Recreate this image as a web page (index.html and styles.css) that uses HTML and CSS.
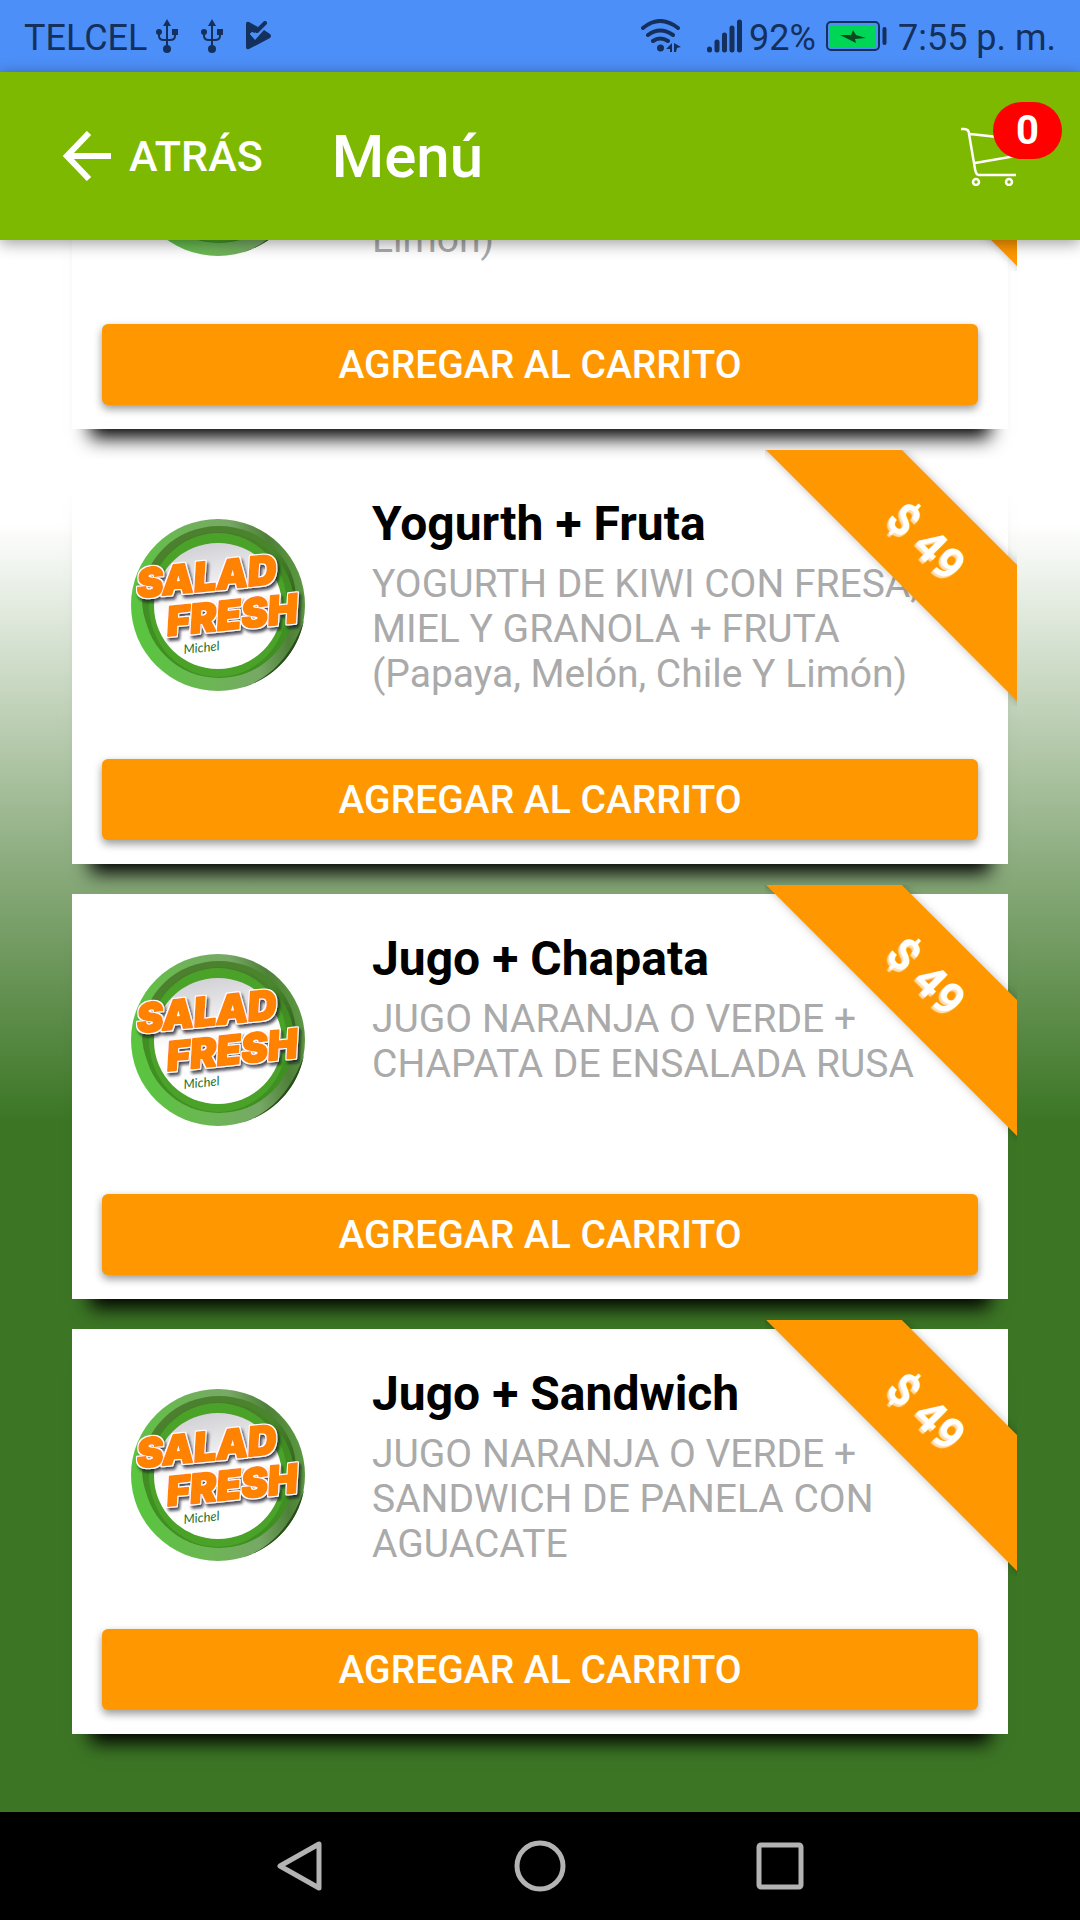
FILE: index.html
```html
<!doctype html>
<html lang="es">
<head>
	<meta charset="UTF-8">
	<meta name="viewport" content="width=device-width, initial-scale=1">
	<title>Menú</title>
	<link rel="stylesheet" href="styles.css">
</head>
<body>
	<!-- shared shapes -->
	<svg class="defs" aria-hidden="true">
		<defs>
			<linearGradient id="rim" x1="0" y1="0.6" x2="1" y2="0.4">
				<stop offset="0" stop-color="#58c63d"/>
				<stop offset="0.35" stop-color="#6cb654"/>
				<stop offset="0.65" stop-color="#77a866"/>
				<stop offset="0.85" stop-color="#4f8038"/>
				<stop offset="1" stop-color="#5c9a42"/>
			</linearGradient>
			<linearGradient id="groove" x1="0" y1="0" x2="1" y2="1">
				<stop offset="0" stop-color="#4e7c31"/>
				<stop offset="0.5" stop-color="#48872a"/>
				<stop offset="1" stop-color="#1d4010"/>
			</linearGradient>
			<linearGradient id="left-rim" x1="0" y1="0" x2="0" y2="1">
				<stop offset="0" stop-color="#4a7a2d"/>
				<stop offset="0.35" stop-color="#3f8f22"/>
				<stop offset="1" stop-color="#3f8f22"/>
			</linearGradient>
			<linearGradient id="plate" x1="0.3" y1="0" x2="0.5" y2="1">
				<stop offset="0" stop-color="#cfcfd4"/>
				<stop offset="0.5" stop-color="#fff"/>
			</linearGradient>
			<filter id="outline" x="-20%" y="-20%" width="140%" height="150%">
				<feMorphology in="SourceAlpha" operator="dilate" radius="1" result="fat"/>
				<feFlood flood-color="#fff"/>
				<feComposite in2="fat" operator="in" result="edge"/>
				<feMerge result="word">
					<feMergeNode in="edge"/>
					<feMergeNode in="SourceGraphic"/>
				</feMerge>
				<feDropShadow in="word" dx="2" dy="3" stdDeviation="1.5" flood-color="#112" flood-opacity="0.75"/>
			</filter>
			<symbol id="salad" viewBox="31 29 174 172">
				<ellipse cx="118" cy="115" rx="87" ry="86" fill="url(#rim)"/>
				<path d="M140 198A87 86 0 0 0 204 130C192 165 170 190 140 198z" fill="#2a4b1c"/>
				<ellipse cx="119" cy="109" rx="77" ry="73" fill="url(#groove)"/>
				<ellipse cx="119" cy="115" rx="75" ry="73" fill="url(#left-rim)"/>
				<ellipse cx="118" cy="115" rx="69" ry="72" fill="#4aa328"/>
				<ellipse cx="118" cy="116" rx="64" ry="63" fill="url(#plate)"/>
				<g class="brand" filter="url(#outline)">
					<text x="38" y="108" transform="rotate(-6 38 108)">SALAD</text>
					<text x="68" y="146" transform="rotate(-6 68 146)">FRESH</text>
				</g>
				<text class="sign" x="84" y="164" transform="rotate(-6 84 164)">Michel</text>
			</symbol>
			<symbol id="usb" viewBox="0 0 24 34">
				<path d="M12 5v26M4 13v4q0 4 5 4h6q5 0 5-4v-4" fill="none" stroke="currentColor" stroke-width="2"/>
				<path d="M12 0l4 7H8z" fill="currentColor"/>
				<circle cx="4" cy="13" r="3" fill="currentColor"/>
				<path d="M17 10h6v6h-6z" fill="currentColor"/>
				<circle cx="12" cy="30" r="4" fill="currentColor"/>
			</symbol>
		</defs>
	</svg>

	<div class="status">
		<span class="carrier">TELCEL</span>
		<svg class="usb" width="24" height="34"><use href="#usb"/></svg>
		<svg class="usb" width="24" height="34"><use href="#usb"/></svg>
		<svg width="27" height="30" viewBox="0 0 27 30">
			<path d="M1 3Q1 0 4 1L13 6l-3 6-3-1-2 2 5 6L19 9l6 4q2 2 0 4L4 28q-3 1-3-2z" fill="currentColor"/>
			<path d="M6 12l4 4L21 3" stroke="#4d8ff8" stroke-width="3" fill="none"/>
			<path d="M12 10l8-8" stroke="currentColor" stroke-width="4" stroke-linecap="round" fill="none"/>
		</svg>
		<div class="status-right">
			<svg class="wifi" width="40" height="34" viewBox="0 0 40 34">
				<path d="M2 9q17-14 35 0M7 16q12-9 25 0M12 22q7-5 15 0" fill="none" stroke="currentColor" stroke-width="4" stroke-linecap="round"/>
				<circle cx="19.500" cy="29" r="3.500" fill="currentColor"/>
				<path d="M31 24v9h-2v-3h-4zM33 24l7 4-4 1-1 4h-2z" fill="currentColor"/>
			</svg>
			<svg width="36" height="34" viewBox="0 0 36 34">
				<path d="M2.500 30v1M10 23v8M17.500 16v15M25 9v22M32.500 3v28" stroke="currentColor" stroke-width="5" stroke-linecap="round"/>
			</svg>
			<span class="level">92%</span>
			<svg width="62" height="30" viewBox="0 0 62 30">
				<rect x="1" y="1" width="52" height="28" rx="4" fill="none" stroke="currentColor" stroke-width="2"/>
				<rect x="4" y="4" width="45" height="22" fill="#00d656"/>
				<path d="M14 14h11l2-5 3 5 10 3-11 1 1 4z" fill="#0b4a20"/>
				<path d="M58.500 8v14" stroke="currentColor" stroke-width="4" stroke-linecap="round"/>
			</svg>
			<span class="clock">7:55 p. m.</span>
		</div>
	</div>

	<header class="toolbar">
		<button class="back" type="button">
			<svg width="48" height="50" viewBox="0 0 48 50">
				<path d="M26 2L4 25l22 23M4 25h44" fill="none" stroke="currentColor" stroke-width="6"/>
			</svg>
			ATRÁS
		</button>
		<h1>Menú</h1>
		<button class="cart" type="button" aria-label="Carrito">
			<svg width="56" height="60" viewBox="0 0 56 60">
				<path d="M0 3h3q5 0 5 5l6 35q1 6 4 6h37M9 8l46 5v17L14 37" fill="none" stroke="currentColor" stroke-width="2.500"/>
				<circle cx="15" cy="56" r="3" fill="none" stroke="currentColor" stroke-width="2.500"/>
				<circle cx="48" cy="56" r="3" fill="none" stroke="currentColor" stroke-width="2.500"/>
			</svg>
			<span class="badge">0</span>
		</button>
	</header>

	<main class="content">
		<!-- scrolled under the toolbar, only its end is in view -->
		<article class="card">
			<div class="ribbon"><span></span></div>
			<div class="info">
				<svg class="logo" role="img" aria-label="Salad Fresh Michel"><use href="#salad"/></svg>
				<div class="text rest">
					<p>Limón)</p>
				</div>
			</div>
			<button class="add" type="button">AGREGAR AL CARRITO</button>
		</article>
		<article class="card">
			<div class="ribbon"><span>$ 49</span></div>
			<div class="info">
				<svg class="logo" role="img" aria-label="Salad Fresh Michel"><use href="#salad"/></svg>
				<div class="text">
					<h2>Yogurth + Fruta</h2>
					<p>YOGURTH DE KIWI CON FRESA, MIEL Y GRANOLA + FRUTA (Papaya, Melón, Chile Y Limón)</p>
				</div>
			</div>
			<button class="add" type="button">AGREGAR AL CARRITO</button>
		</article>
		<article class="card">
			<div class="ribbon"><span>$ 49</span></div>
			<div class="info">
				<svg class="logo" role="img" aria-label="Salad Fresh Michel"><use href="#salad"/></svg>
				<div class="text">
					<h2>Jugo + Chapata</h2>
					<p>JUGO NARANJA O VERDE + CHAPATA DE ENSALADA RUSA</p>
				</div>
			</div>
			<button class="add" type="button">AGREGAR AL CARRITO</button>
		</article>
		<article class="card">
			<div class="ribbon"><span>$ 49</span></div>
			<div class="info">
				<svg class="logo" role="img" aria-label="Salad Fresh Michel"><use href="#salad"/></svg>
				<div class="text">
					<h2>Jugo + Sandwich</h2>
					<p>JUGO NARANJA O VERDE + SANDWICH DE PANELA CON AGUACATE</p>
				</div>
			</div>
			<button class="add" type="button">AGREGAR AL CARRITO</button>
		</article>
	</main>

	<nav class="keys">
		<button type="button" aria-label="Atrás">
			<svg width="52" height="52" viewBox="0 0 52 52"><path d="M45 4v44L6 26z"/></svg>
		</button>
		<button type="button" aria-label="Inicio">
			<svg width="52" height="52" viewBox="0 0 52 52"><circle cx="26" cy="26" r="23"/></svg>
		</button>
		<button type="button" aria-label="Recientes">
			<svg width="52" height="52" viewBox="0 0 52 52"><rect x="5" y="5" width="42" height="42" rx="2"/></svg>
		</button>
	</nav>
</body>
</html>
```
FILE: styles.css
```css
*{
	margin:0;
	padding:0;
	box-sizing:border-box;
}
body{
	display:flex;
	flex-direction:column;
	height:100vh;
	font-family:Roboto,"Liberation Sans",sans-serif;
	overflow:hidden;
}
button{
	border:none;
	background:none;
	color:inherit;
	font-family:inherit;
	cursor:pointer;
}
.defs{
	position:absolute;
	width:0;
	height:0;
}

/* status bar */
.status{
	display:flex;
	flex:none;
	align-items:center;
	height:72px;
	padding:0 24px;
	background:#4d8ff8;
	color:#14305c;
	font-size:36px;
}
.status span{
	padding-top:4px;
}
.carrier{
	margin-right:8px;
}
.usb{
	margin-right:21px;
}
.status-right{
	display:flex;
	align-items:center;
	margin-left:auto;
}
.wifi{
	margin-right:26px;
}
.level{
	margin:0 10px 0 6px;
}
.clock{
	margin-left:10px;
}

/* toolbar */
.toolbar{
	display:flex;
	flex:none;
	align-items:center;
	position:relative;
	z-index:5;
	height:168px;
	padding:0 63px;
	background:#7db900;
	color:#fff;
	box-shadow:0 3px 15px rgba(0,0,0,.4);
}
.back{
	display:flex;
	align-items:center;
	gap:18px;
	font-size:43px;
	font-weight:500;
}
.toolbar h1{
	margin-left:69px;
	font-size:60px;
	font-weight:500;
}
.cart{
	position:relative;
	height:60px;
	margin-left:auto;
}
.cart svg{
	display:block;
}
.badge{
	position:absolute;
	top:-24px;
	right:-45px;
	width:69px;
	height:57px;
	border-radius:30px;
	background:#f00;
	font-size:40px;
	font-weight:700;
	line-height:57px;
	text-align:center;
}

/* list */
.content{
	display:flex;
	flex:1;
	flex-direction:column;
	justify-content:flex-end;
	gap:30px;
	min-height:0;
	padding:0 72px 78px;
	background:linear-gradient(#fff 18%,#8aab7c 40%,#3c7625 56%);
	overflow:hidden;
}
.card{
	position:relative;
	flex:none;
	padding:0 30px 24px;
	background:#fff;
	box-shadow:0 27px 18px -18px #000;
}
.info{
	display:flex;
	height:300px;
	padding:36px 29px 0;
}
.logo{
	flex:none;
	width:174px;
	height:172px;
	margin:24px 67px 0 0;
}
.brand text{
	fill:#ff8200;
	stroke:#ff8200;
	stroke-width:2px;
	stroke-linejoin:round;
	font-family:Inter,"Open Sans",sans-serif;
	font-size:40px;
	font-style:italic;
	font-weight:900;
}
.sign{
	fill:#23702a;
	font-family:Lato,sans-serif;
	font-size:13px;
	font-style:italic;
}
.text h2{
	margin-bottom:9px;
	font-size:48px;
	font-weight:700;
	line-height:58px;
}
.text p{
	color:#aaa;
	font-size:39px;
	line-height:45px;
}
.rest{
	padding-top:157px;
}
.add{
	display:block;
	width:100%;
	height:81px;
	border-radius:6px;
	background:#ff9800;
	color:#fff;
	font-size:39px;
	font-weight:500;
	box-shadow:0 4px 8px rgba(0,0,0,.4);
}

/* price ribbon */
.ribbon{
	position:absolute;
	top:-9px;
	right:-9px;
	width:252px;
	height:256px;
	overflow:hidden;
}
.ribbon span{
	position:absolute;
	top:44px;
	left:-39px;
	width:400px;
	height:96px;
	background:#ff9800;
	color:#fff;
	font-size:45px;
	font-weight:700;
	line-height:96px;
	text-align:center;
	text-shadow:0 3px 1px #ffe0b0;
	box-shadow:0 0 8px rgba(0,0,0,.25);
	transform:rotate(45deg);
}

/* android keys */
.keys{
	display:flex;
	flex:none;
	justify-content:center;
	height:108px;
	background:#000;
}
.keys button{
	display:flex;
	align-items:center;
	justify-content:center;
	width:240px;
}
.keys svg{
	fill:none;
	stroke:#b3b3b3;
	stroke-width:5px;
	stroke-linejoin:round;
}
```
